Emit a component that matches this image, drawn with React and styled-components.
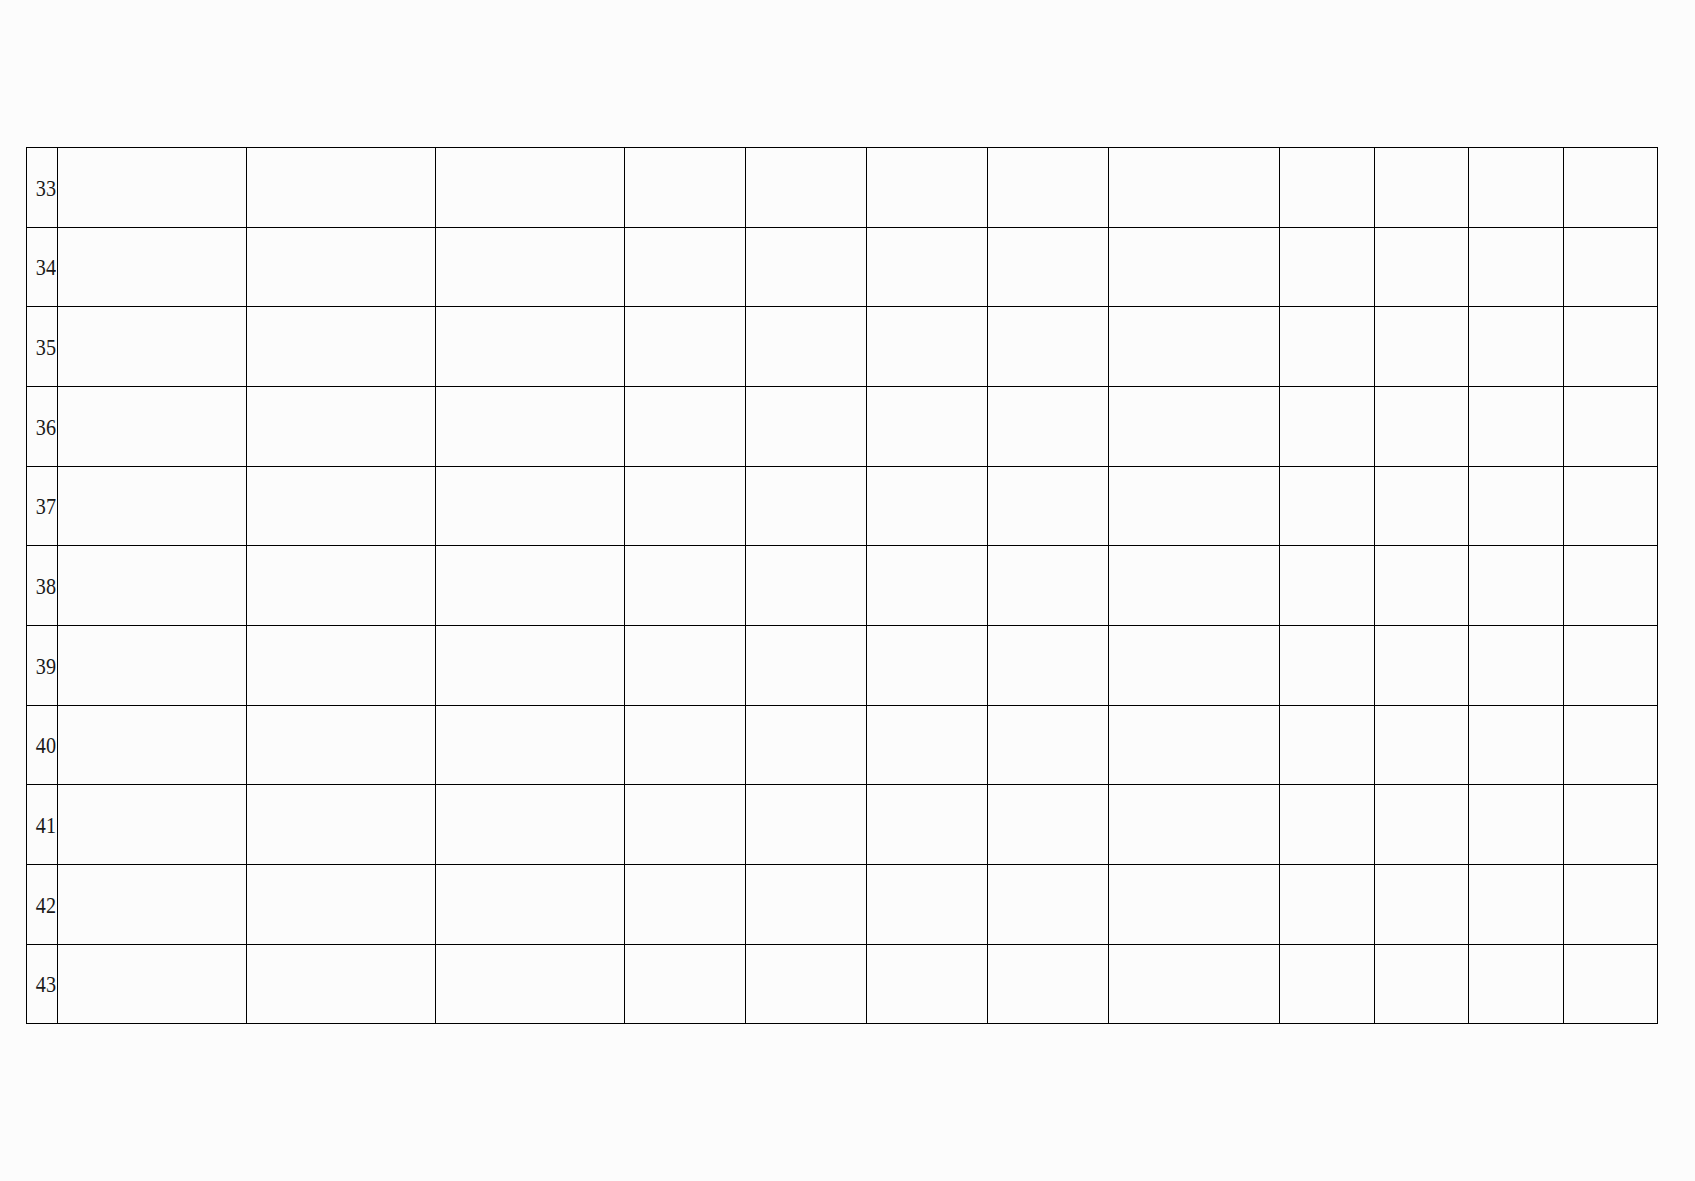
import React from "react";
import styled, { createGlobalStyle } from "styled-components";

const Global = createGlobalStyle`
  html, body { margin: 0; padding: 0; background: #fcfcfc; }
  body { font-family: "Liberation Serif", serif; }
`;

const Page = styled.div`
  width: 1695px;
  height: 1181px;
  box-sizing: border-box;
  padding: 147px 0 0 26px;
  background: #fcfcfc;
`;

const Sheet = styled.div`
  display: inline-flex;
  flex-direction: column;
  gap: 1px;
  padding: 1px;
  background: #000;
`;

const COLS = "30px 188px 188px 188px 120px 120px 120px 120px 170px 94px 93px 94px 93px";

const Row = styled.div`
  display: grid;
  grid-template-columns: ${COLS};
  gap: 1px;
  height: ${(p) => p.$h}px;
`;

const Cell = styled.div`
  background: #fcfcfc;
`;

const IndexCell = styled(Cell)`
  display: flex;
  align-items: center;
  justify-content: flex-end;
  padding-right: 1px;
  box-sizing: border-box;
  overflow: visible;
`;

const Num = styled.span`
  display: inline-block;
  font-family: "Liberation Serif", "DejaVu Serif", serif;
  font-size: 24px;
  line-height: 1;
  color: #1a1a1a;
  transform: scaleX(0.84);
  transform-origin: right center;
  -webkit-font-smoothing: none;
`;

const rows = [
  [33, 79], [34, 78], [35, 79], [36, 79], [37, 78], [38, 79],
  [39, 79], [40, 78], [41, 79], [42, 79], [43, 78],
];

export default function App() {
  return (
    <Page>
      <Global />
      <Sheet>
        {rows.map(([n, h]) => (
          <Row key={n} $h={h}>
            <IndexCell>
              <Num>{n}</Num>
            </IndexCell>
            {Array.from({ length: 12 }).map((_, i) => (
              <Cell key={i} />
            ))}
          </Row>
        ))}
      </Sheet>
    </Page>
  );
}
